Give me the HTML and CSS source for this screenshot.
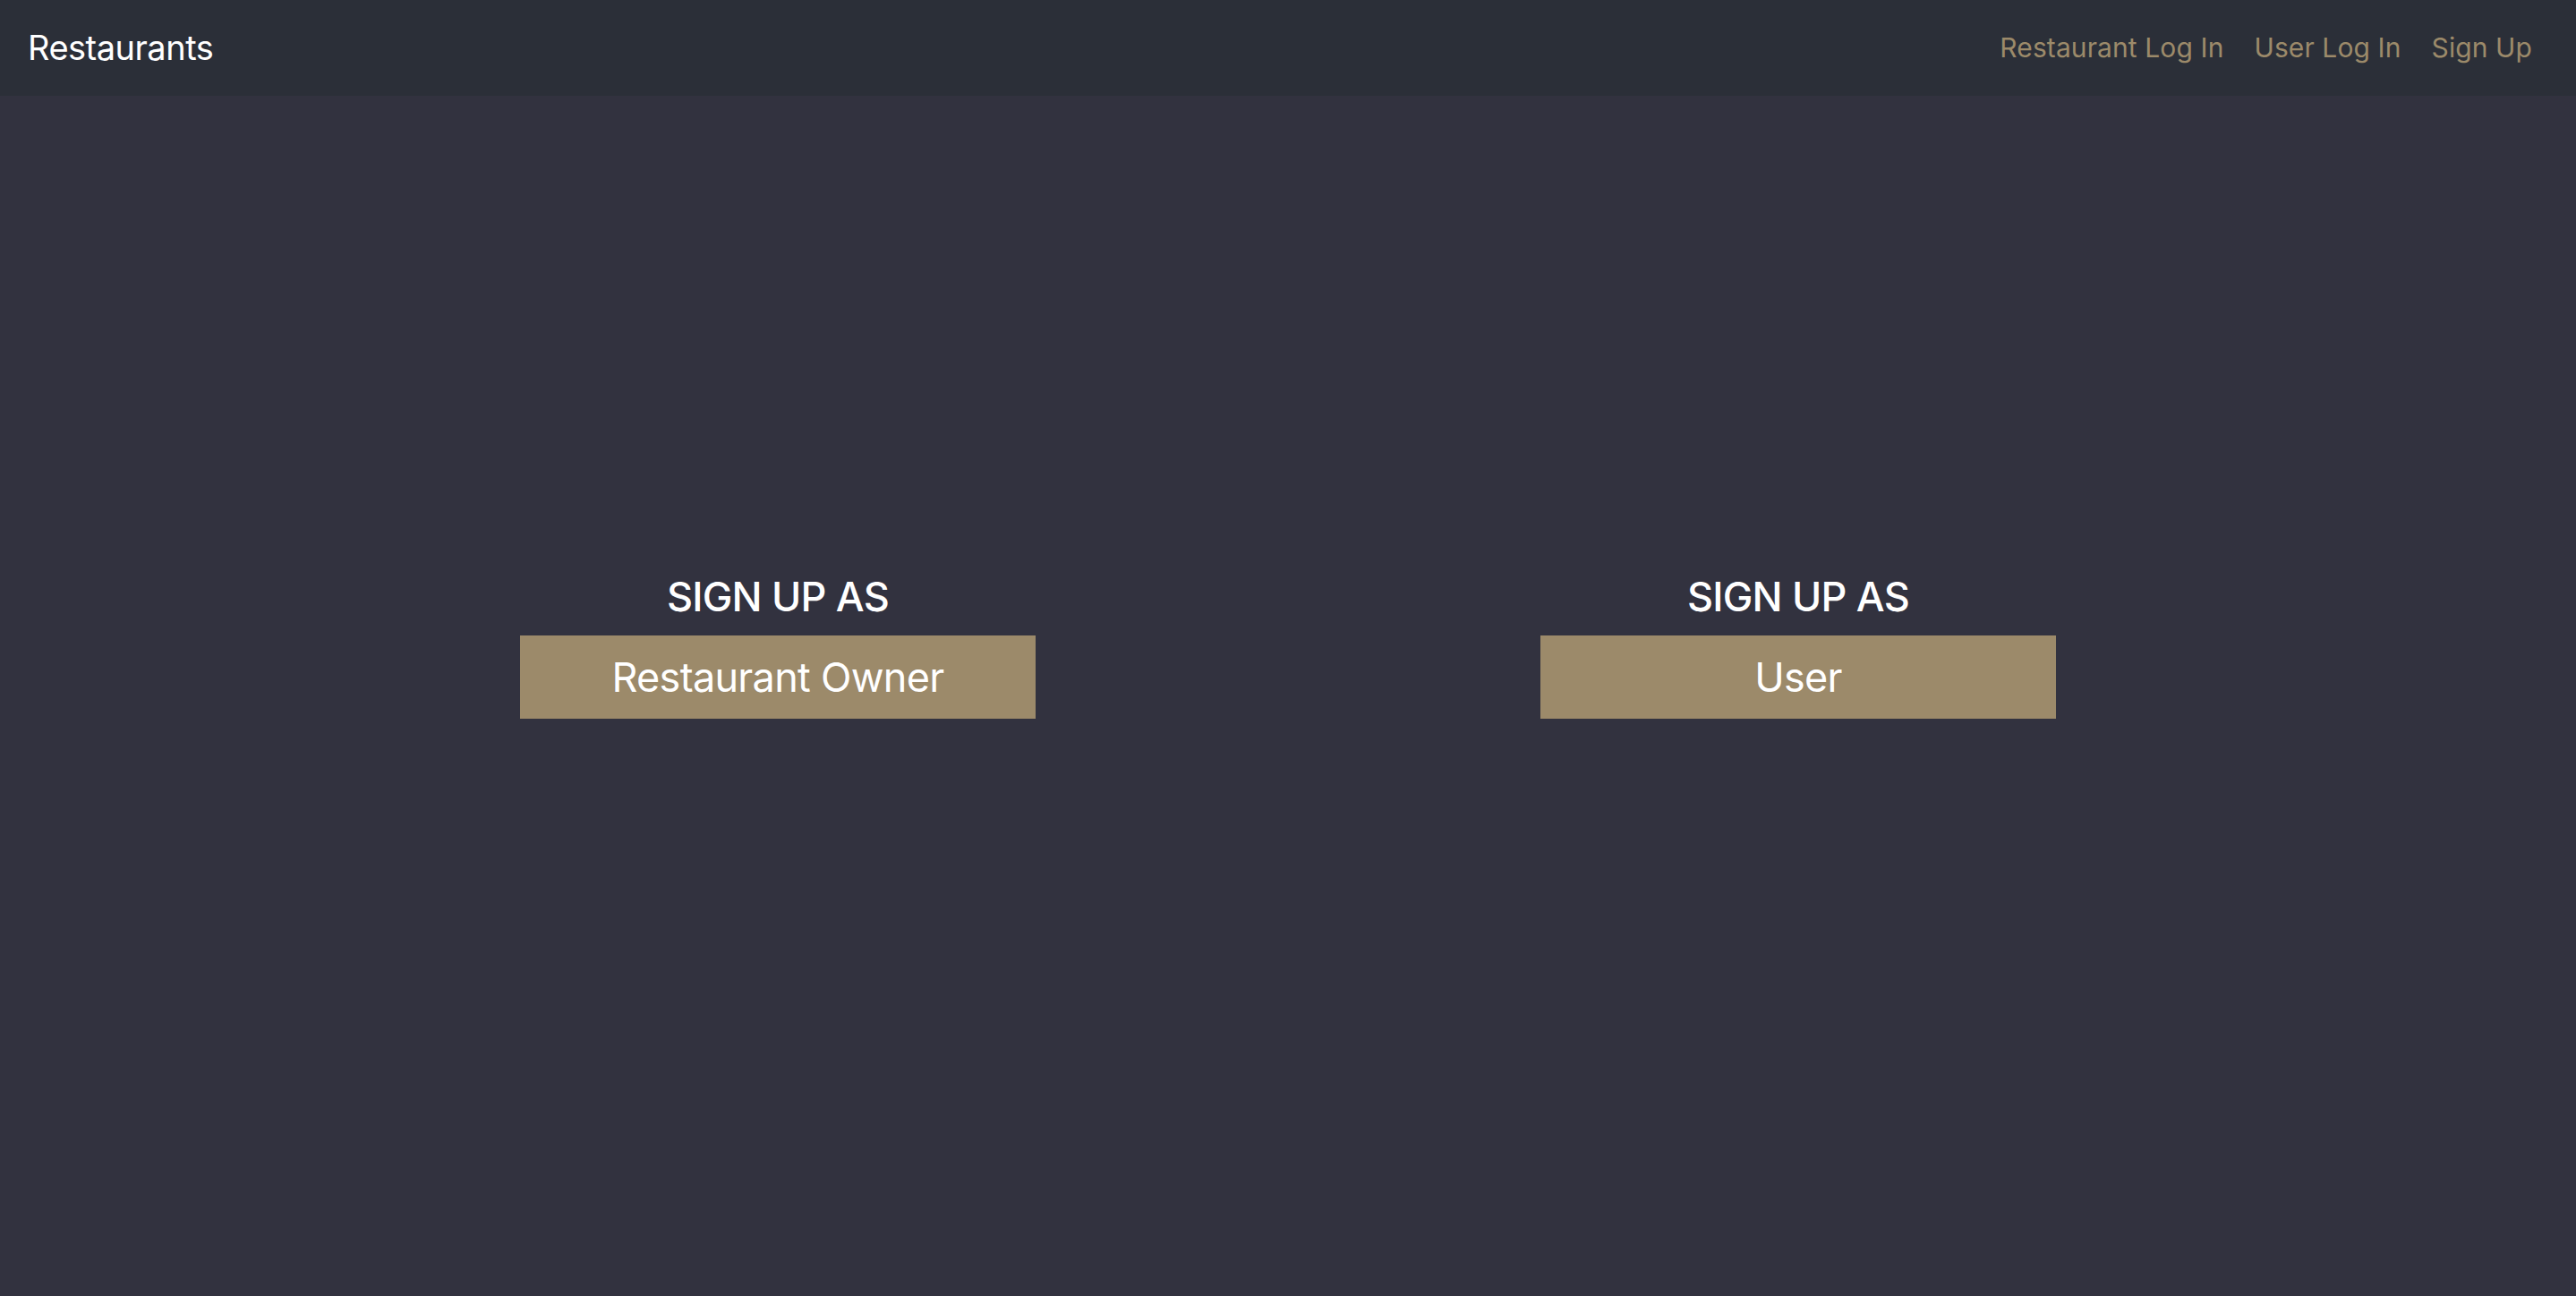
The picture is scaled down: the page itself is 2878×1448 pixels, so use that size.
FILE: index.html
```html
<!DOCTYPE html>
<html lang="en">
<head>
<meta charset="utf-8">
<title>Restaurants</title>
<link rel="stylesheet" href="styles.css">
</head>
<body>
<nav class="navbar">
  <a class="brand" href="#">Restaurants</a>
  <ul class="nav-links">
    <li><a href="#">Restaurant Log In</a></li>
    <li><a href="#">User Log In</a></li>
    <li><a href="#">Sign Up</a></li>
  </ul>
</nav>
<main class="main">
  <div class="container">
    <div class="col">
      <h3 class="title">SIGN UP AS</h3>
      <a class="btn" href="#">Restaurant Owner</a>
    </div>
    <div class="col">
      <h3 class="title">SIGN UP AS</h3>
      <a class="btn" href="#">User</a>
    </div>
  </div>
</main>
</body>
</html>
```
FILE: styles.css
```css
* { box-sizing: border-box; }
html, body {
  margin: 0;
  padding: 0;
  background: #32323f;
  font-family: Inter, "Noto Sans", sans-serif;
  color: #ffffff;
}
a { text-decoration: none; }
.navbar {
  height: 107px;
  background: #2b2f38;
  display: flex;
  align-items: center;
  justify-content: space-between;
  padding: 0 32px 0 31px;
}
.brand {
  color: #ffffff;
  font-size: 38px;
  letter-spacing: -0.5px;
  line-height: 1;
  padding-bottom: 2px;
}
.nav-links {
  list-style: none;
  margin: 0;
  padding: 0;
  display: flex;
}
.nav-links a {
  display: block;
  padding: 0 17px;
  color: #9c8a6a;
  font-size: 30px;
  letter-spacing: 0.1px;
  line-height: 1;
  padding-bottom: 2px;
}
.main {
  min-height: 1341px;
  display: flex;
  align-items: center;
  justify-content: center;
  padding-bottom: 112px;
}
.container {
  width: 2280px;
  display: flex;
}
.col {
  flex: 1 1 0;
  display: flex;
  flex-direction: column;
  align-items: center;
}
.title {
  margin: 0 0 16px;
  font-size: 45px;
  font-weight: 500;
  line-height: 54px;
  letter-spacing: -0.8px;
}
.btn {
  width: 576px;
  height: 93px;
  background: #9c8a6a;
  color: #ffffff;
  font-size: 45px;
  letter-spacing: -0.7px;
  display: flex;
  align-items: center;
  justify-content: center;
}
```
